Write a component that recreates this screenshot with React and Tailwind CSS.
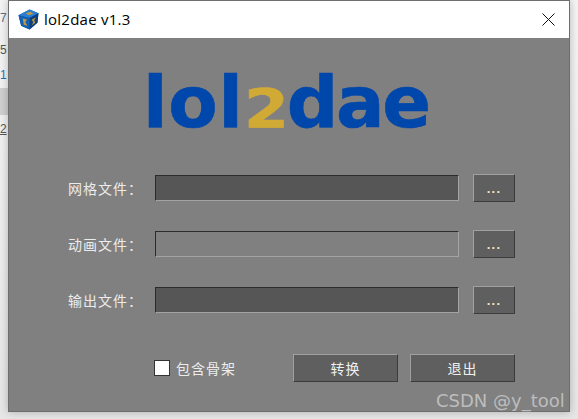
const cjk = { fontFamily: '"Noto Sans CJK SC", sans-serif' };
const arial = { fontFamily: '"Liberation Sans", sans-serif' };

function CubeIcon() {
  return (
    <svg width="21" height="21" viewBox="0 0 20 20" className="shrink-0">
      <path d="M0.5 6 L11 0.5 L19.5 4 L18.5 13 L11 19.5 L3 16 Z" fill="#0f4f9c" />
      <path d="M0.5 6 L11 0.5 L19.5 4 L11 8.5 Z" fill="#2a7fd4" />
      <path d="M11 8.5 L19.5 4 L18.5 13 L11 19.5 Z" fill="#0c3f80" />
      <path d="M0.5 6 L11 8.5 L11 19.5 L3 16 Z" fill="#1460b4" />
      <path d="M4.5 9 L8.5 10 L7 12.5 L9 16 L5.5 15 L5 12 Z" fill="#c09a3c" />
      <path d="M13 10 L17 8 L15.5 11 L16.5 13 L13 15.5 L14.5 12.5 Z" fill="#b8923a" />
      <path d="M7.5 4 L12 2.5 L14.5 4.5 L10 6 Z" fill="#c09a3c" />
    </svg>
  );
}

function FileRow({ label, filled }) {
  return (
    <div className="flex items-center h-[28px]">
      <span className="w-[87px] text-[14px] text-[#ececec] tracking-[1px]" style={cjk}>{label}</span>
      <div className={`w-[304px] h-[26px] border border-t-[#2b2b2b] border-l-[#2b2b2b] border-r-[#a4a4a4] border-b-[#a4a4a4] ${filled ? 'bg-[#565656]' : 'bg-[#808080]'}`} />
      <button className="ml-[14px] w-[42px] h-[28px] bg-[#5f5f5f] border border-t-[#a0a0a0] border-l-[#a0a0a0] border-r-[#3c3c3c] border-b-[#3c3c3c] text-[13px] font-bold tracking-[1.2px] text-[#f2e2c2] leading-none" style={arial}>
        ...
      </button>
    </div>
  );
}

function ActionButton({ children }) {
  return (
    <button className="w-[105px] h-[28px] bg-[#5f5f5f] border border-t-[#a0a0a0] border-l-[#a0a0a0] border-r-[#3c3c3c] border-b-[#3c3c3c] text-[14px] tracking-[1px] text-[#f0f0f0]" style={cjk}>
      {children}
    </button>
  );
}

export default function App() {
  return (
    <div className="relative w-[578px] h-[419px] overflow-hidden bg-gradient-to-b from-[#f4f4f4] to-[#e6e6e6]">
      {/* bits of the window behind */}
      <div className="absolute left-0 top-[88px] w-[8px] h-[27px] bg-[#cfcfcf]" />
      <span className="absolute left-0 top-[9px] text-[12px] text-[#56708c]" style={arial}>7</span>
      <span className="absolute left-0 top-[41px] text-[12px] text-[#555]" style={arial}>5</span>
      <span className="absolute left-0 top-[66px] text-[12px] text-[#1f74b8]" style={arial}>1</span>
      <span className="absolute left-0 top-[120px] text-[12px] text-[#555] underline" style={arial}>2</span>

      {/* tool window */}
      <div className="absolute left-[8px] top-0 w-[562px] h-[412px] border border-[#6e6e6e] shadow-[0_0_8px_rgba(0,0,0,0.25)] flex flex-col">
        <div className="h-[37px] bg-white flex items-center pl-[9px] shrink-0">
          <CubeIcon />
          <span className="ml-[5px] text-[15px] tracking-[0.25px] text-black" style={{ fontFamily: '"Open Sans", sans-serif' }}>lol2dae v1.3</span>
          <svg width="13" height="13" viewBox="0 0 13 13" className="ml-auto mr-[14px]">
            <path d="M0.5 0.5 L12.5 12.5 M12.5 0.5 L0.5 12.5" stroke="#111" strokeWidth="1" fill="none" />
          </svg>
        </div>
        <div className="flex-1 bg-[#808080] flex flex-col">
          <div className="h-[136px] pt-[24px] pl-[134px]">
            <div className="text-[72px] leading-[80px] font-bold text-[#0047ab] whitespace-nowrap [-webkit-text-stroke:0.6px_#0047ab]" style={{ fontFamily: '"DejaVu Sans", sans-serif' }}>
              <span className="tracking-[0.6px]">lol</span><span className="inline-block w-[43px] origin-left scale-x-[1.22] text-[53px] text-[#d1aa35] [-webkit-text-stroke:0.6px_#d1aa35]">2</span><span className="tracking-[-2.2px]">dae</span>
            </div>
          </div>
          <div className="flex flex-col gap-[28px] pl-[59px]">
            <FileRow label="网格文件：" filled />
            <FileRow label="动画文件：" />
            <FileRow label="输出文件：" filled />
          </div>
          <div className="flex items-center mt-[40px] pl-[145px]">
            <span className="w-[16px] h-[16px] bg-white border border-[#333]" />
            <span className="ml-[6px] text-[14px] text-[#ececec] tracking-[1px]" style={cjk}>包含骨架</span>
            <div className="ml-[57px] flex gap-[12px]">
              <ActionButton>转换</ActionButton>
              <ActionButton>退出</ActionButton>
            </div>
          </div>
        </div>
      </div>

      {/* watermark */}
      <span className="absolute left-[436px] top-[387px] text-[18px] text-[#bdbdbd] whitespace-nowrap" style={{ fontFamily: '"DejaVu Sans", sans-serif' }}>CSDN @y_tool</span>
    </div>
  );
}
